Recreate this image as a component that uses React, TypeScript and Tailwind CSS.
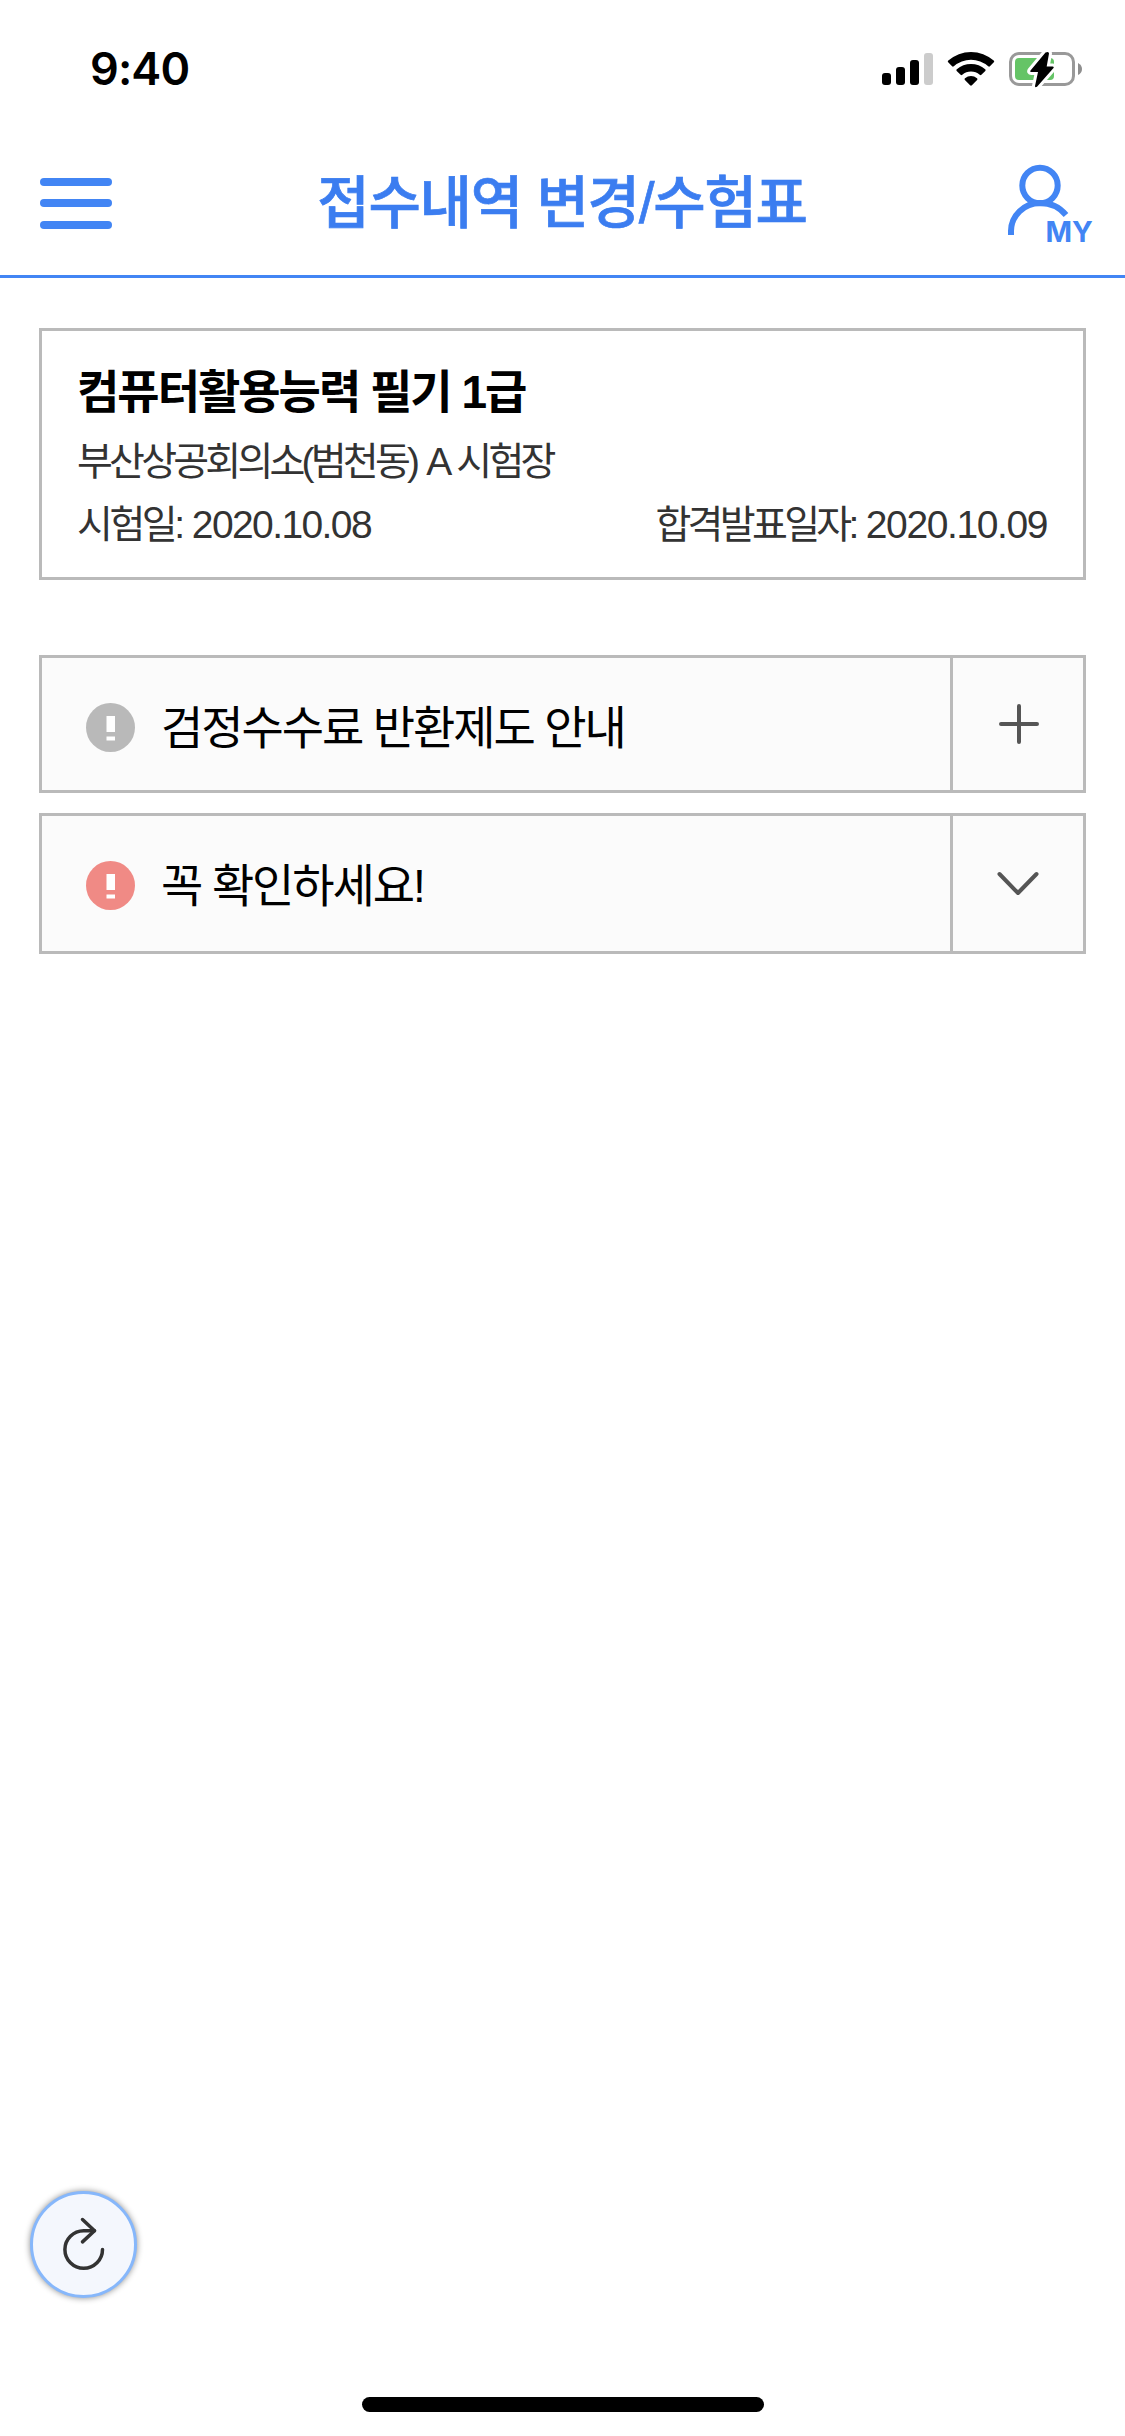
import React, { useState } from 'react';

interface NoticeRowProps {
  title: React.ReactNode;
  badgeColor: string;
  icon: 'plus' | 'chevron';
  className: string;
}

const StatusBar: React.FC = () => (
  <div className="flex h-[132px] items-start justify-between pl-[90px] pr-[42px]">
    <span className="mt-[42px] font-['Inter',sans-serif] text-[45px] leading-[54px] font-semibold tracking-[-0.9px] text-black">
      9:40
    </span>
    <svg className="mt-[50px]" width="202" height="38" viewBox="0 0 202 38" fill="none">
      {/* Signal */}
      <rect x="1" y="23" width="9" height="12" rx="3" fill="#000" />
      <rect x="15" y="17" width="9" height="18" rx="3" fill="#000" />
      <rect x="29" y="10" width="9" height="25" rx="3" fill="#000" />
      <rect x="43" y="3" width="9" height="32" rx="3" fill="#ccc" />
      {/* Wifi */}
      <g fill="#000" transform="translate(0 .8)">
        <path d="M67.300 9.800a34 34 0 0 1 45.400 0q.9.800.1 1.700l-3.900 4q-.8.800-1.700 0a26 26 0 0 0-34.400 0q-.9.800-1.700 0l-3.900-4q-.8-.9.1-1.700z" />
        <path d="M75.800 18.500a21.500 21.500 0 0 1 28.400 0q.9.800.1 1.600l-3.900 3.900q-.8.800-1.700 0a13.500 13.500 0 0 0-17.400 0q-.9.800-1.700 0l-3.900-3.900q-.8-.8.1-1.600z" />
        <path d="M84 27.400a9.600 9.600 0 0 1 12 0q1 .8.100 1.700l-5.200 5.400q-.9.900-1.800 0l-5.200-5.400q-.9-.9.1-1.700z" />
      </g>
      {/* Battery */}
      <rect x="129.500" y="3.500" width="63" height="31" rx="8.500" stroke="#999" strokeWidth="3" />
      <rect x="134" y="8" width="39" height="22" rx="4" fill="#65c466" />
      <path d="M197 13v12q4-2 4-6t-4-6z" fill="#8e8e8e" />
      <path
        d="M164.500 2.500 149.500 20.500q-1 1.500 .8 1.500h6.700l-3 14q0 2 2 .8L172.500 18q1-1.500-.8-1.500h-6l2.300-13q0-2.500-3.500-1z"
        fill="#000"
        stroke="#fff"
        strokeWidth="6"
        strokeLinejoin="round"
        paintOrder="stroke"
      />
    </svg>
  </div>
);

const Header: React.FC = () => (
  <header className="flex h-[146px] items-start justify-between border-b-[3px] border-[#4285f4] pr-[32px] pl-10">
    <button className="mt-[46px] flex w-[72px] flex-col" aria-label="메뉴">
      <span className="h-2 w-full rounded-full bg-[#4285f4]" />
      <span className="mt-[13px] h-2 w-full rounded-full bg-[#4285f4]" />
      <span className="mt-[14px] h-2 w-full rounded-full bg-[#4285f4]" />
    </button>
    <h1 className="mt-[29px] ml-[9px] font-['Liberation_Sans','Noto_Sans_CJK_KR',sans-serif] text-[57px] leading-[84px] font-medium tracking-[-1.3px] whitespace-nowrap text-[#3b7df0] [-webkit-text-stroke:0.7px_#3b7df0]">
      접수내역 변경/수험표
    </h1>
    <button className="mt-[28px]" aria-label="마이페이지">
      <svg width="90" height="94" viewBox="0 0 90 94" fill="none">
        <circle cx="37" cy="25.500" r="17.700" stroke="#4285f4" strokeWidth="6" />
        <path d="M8 75v-4c0-15 13-28 29-28 10 0 19 3.500 26 12" stroke="#4285f4" strokeWidth="6" />
        <text
          x="42.500"
          y="82"
          fontFamily="Inter, sans-serif"
          fontSize="28.5"
          fontWeight="700"
          fill="#4285f4"
        >
          MY
        </text>
      </svg>
    </button>
  </header>
);

const ExamCard: React.FC = () => (
  <section className="mt-[50px] h-[252px] border-[3px] border-[#bababa] pr-9 pl-[35px] font-['Liberation_Sans','Noto_Sans_CJK_KR',sans-serif] whitespace-nowrap">
    <h2 className="mt-[28px] text-[46px] leading-[66px] font-bold tracking-[-2px] text-black">
      컴퓨터활용능력 필기 1급
    </h2>
    <p className="mt-[9px] text-[39px] leading-[56px] tracking-[-3.8px] text-[#333] [word-spacing:3px]">
      부산상공회의소(범천동) A 시험장
    </p>
    <div className="mt-[7px] flex justify-between text-[39px] leading-[56px] text-[#333]">
      <p className="tracking-[-3.5px] [word-spacing:3px]">
        시험일: <span className="tracking-[-1.6px]">2020.10.08</span>
      </p>
      <p className="tracking-[-3.7px] [word-spacing:3px]">
        합격발표일자: <span className="tracking-[-1.4px]">2020.10.09</span>
      </p>
    </div>
  </section>
);

const NoticeRow: React.FC<NoticeRowProps> = ({ title, badgeColor, icon, className }) => {
  const [open, setOpen] = useState(false);

  return (
    <div className={`flex border-[3px] border-[#bababa] bg-[#fbfbfb] ${className}`}>
      <div className="flex flex-1 items-start pl-[44px]">
        <svg className="mt-[45px] shrink-0" width="49" height="49" viewBox="0 0 49 49">
          <circle cx="24.500" cy="24.500" r="24.500" fill={badgeColor} />
          <rect x="20.500" y="13" width="8.500" height="16" fill="#fff" />
          <rect x="20.500" y="33.500" width="8.500" height="4" fill="#fff" />
        </svg>
        <span className="mt-[37px] ml-[26px] font-['Liberation_Sans','Noto_Sans_CJK_KR',sans-serif] text-[46px] leading-[66px] tracking-[-2.1px] whitespace-nowrap text-black">
          {title}
        </span>
      </div>
      <button
        onClick={() => setOpen(!open)}
        aria-expanded={open}
        className="flex w-[133px] items-start justify-center border-l-[3px] border-[#bababa]"
      >
        <svg
          className="mt-[42px]"
          width="48"
          height="48"
          viewBox="0 0 48 48"
          fill="none"
          stroke="#555"
          strokeWidth="4"
          strokeLinecap="round"
        >
          {icon === 'plus' ? (
            <path d="M25 6v36M7 24h36" />
          ) : (
            <path d="M5.500 16l18.500 19 18.500-19" strokeLinejoin="round" />
          )}
        </svg>
      </button>
    </div>
  );
};

export default function App() {
  return (
    <div className="flex h-[2436px] w-[1125px] flex-col overflow-hidden bg-white">
      <StatusBar />
      <Header />

      <main className="flex-1 px-[39px]">
        <ExamCard />
        <div className="mt-[75px] flex flex-col gap-5">
          <NoticeRow title="검정수수료 반환제도 안내" badgeColor="#b9b9b9" icon="plus" className="h-[138px]" />
          <NoticeRow title="꼭 확인하세요!" badgeColor="#f08a85" icon="chevron" className="h-[141px]" />
        </div>
      </main>

      <footer className="flex flex-col pb-6">
        <button
          aria-label="새로고침"
          className="ml-[30px] flex size-[107px] items-center justify-center rounded-full border-[3px] border-[#86b7fb] bg-[#f4f7fd] shadow-[0_0_6px_rgba(0,0,0,0.45)]"
        >
          <svg
            width="60"
            height="60"
            viewBox="0 0 60 60"
            fill="none"
            stroke="#333"
            strokeWidth="3.500"
            strokeLinecap="round"
            strokeLinejoin="round"
          >
            <path d="M48.500 34.500a18.800 18.800 0 1 1-18.800-18.800H40.500" />
            <path d="M28.500 4.500l12 11.200-12 11.200" />
          </svg>
        </button>
        <div className="mx-auto mt-[99px] h-[15px] w-[402px] rounded-full bg-black" />
      </footer>
    </div>
  );
}
